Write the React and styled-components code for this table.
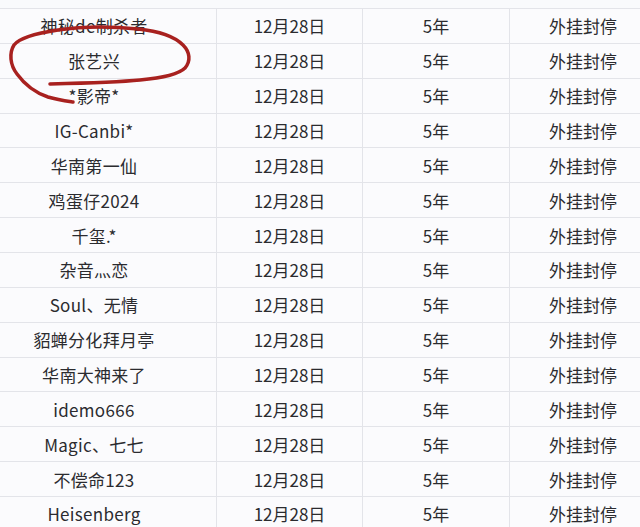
import styled, { createGlobalStyle } from "styled-components";

const GlobalStyle = createGlobalStyle`
  html, body {
    margin: 0;
    padding: 0;
    background: #f9fafc;
    overflow: hidden;
  }
`;

const rows = [
  "神秘de制杀者",
  "张艺兴",
  "*影帝*",
  "IG-Canbi*",
  "华南第一仙",
  "鸡蛋仔2024",
  "千玺.*",
  "杂音灬恋",
  "Soul、无情",
  "貂蝉分化拜月亭",
  "华南大神来了",
  "idemo666",
  "Magic、七七",
  "不偿命123",
  "Heisenberg",
];

const Page = styled.div`
  position: relative;
  width: 640px;
  height: 527px;
  overflow: hidden;
  padding-top: 8px;
  box-sizing: border-box;
  font-family: "Noto Sans CJK SC", "Noto Sans", sans-serif;
`;

const Table = styled.div`
  display: grid;
  grid-template-columns: 245px 146px 147px 147px;
  grid-auto-rows: 34.86px;
  margin-left: -28px;
  border-top: 1px solid #e3e4e9;
`;

const Cell = styled.div`
  display: flex;
  align-items: center;
  justify-content: center;
  box-sizing: border-box;
  border-bottom: 1px solid #e3e4e9;
  border-right: 1px solid #e3e4e9;
  background: #fbfbfd;
  color: #2b2b2f;
  font-size: 17px;
  letter-spacing: ${(p) => (p.$latin ? "0.3px" : "0")};
  line-height: 1;
  white-space: nowrap;
`;

const Marker = styled.svg`
  position: absolute;
  left: 0;
  top: 0;
  pointer-events: none;
`;

export default function App() {
  return (
    <Page>
      <GlobalStyle />
      <Table>
        {rows.map((name) => (
          <>
            <Cell key={name + "n"} $latin>{name}</Cell>
            <Cell key={name + "d"}>12月28日</Cell>
            <Cell key={name + "y"}>5年</Cell>
            <Cell key={name + "s"}>外挂封停</Cell>
          </>
        ))}
      </Table>
      <Marker width="640" height="527" viewBox="0 0 640 527">
        <path
          d="M50 84 C90 83 120 82 140 80 C162 78 178 75 185 68 C191 61 190 52 183 45 C174 36 158 31 138 29 C108 26 78 27 58 30 C38 33 20 37 14 45 C9 53 10 65 17 74 C25 85 36 93 48 97 C58 100 66 101 73 102"
          fill="none"
          stroke="#a8211f"
          strokeWidth="3.5"
          strokeLinecap="round"
          strokeLinejoin="round"
        />
      </Marker>
    </Page>
  );
}
